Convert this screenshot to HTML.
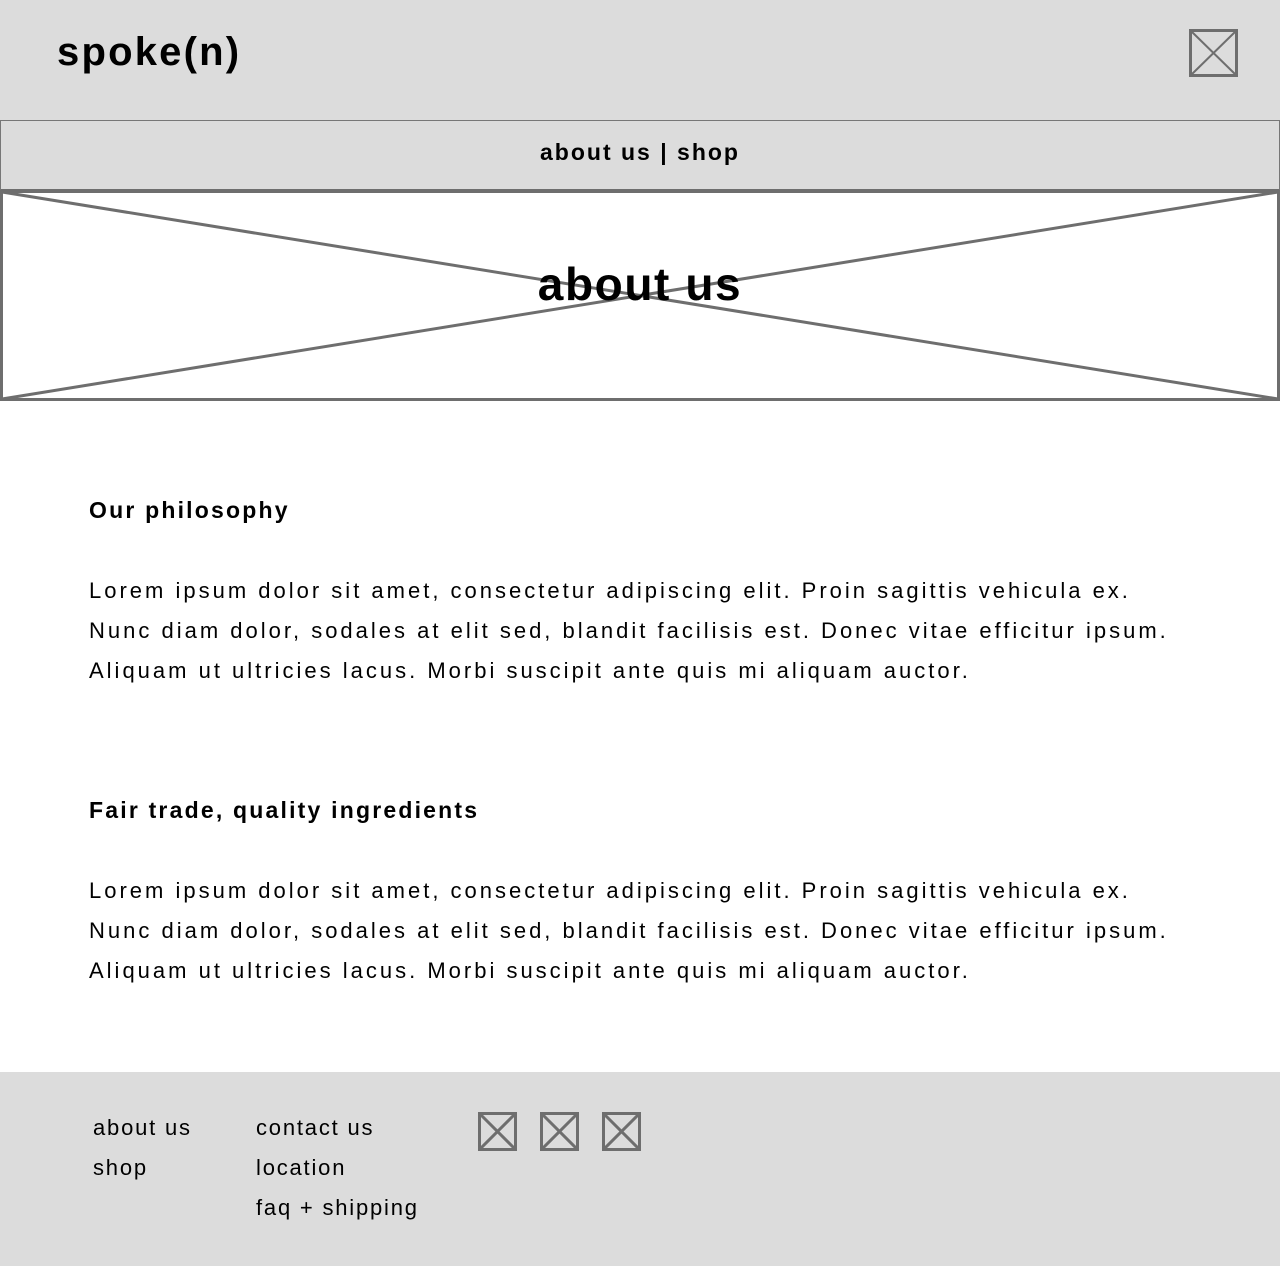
<!DOCTYPE html>
<html><head><meta charset="utf-8"><style>
*{margin:0;padding:0;box-sizing:border-box}
body{width:1280px;height:1266px;background:#fff;font-family:"Liberation Sans",sans-serif;color:#000;position:relative;overflow:hidden}
.hdr{position:absolute;left:0;top:0;width:1280px;height:120px;background:#dcdcdc}
.logo{position:absolute;left:57px;top:30px;font-size:40px;letter-spacing:2.2px;font-weight:bold}
.nav{position:absolute;left:0;top:120px;width:1280px;height:72px;background:#dcdcdc;border:1px solid #777;border-bottom:3px solid #6e6e6e;text-align:center;font-weight:bold;font-size:23px;letter-spacing:2px;line-height:62px}
h2{position:absolute;left:89px;font-size:23px;letter-spacing:2.2px;font-weight:bold}
p{position:absolute;left:89px;font-size:22px;letter-spacing:3px;line-height:40px;white-space:nowrap}
.ft{position:absolute;left:0;top:1072px;width:1280px;height:194px;background:#dcdcdc;font-size:22px;letter-spacing:1.8px;line-height:40px}
.ft div{position:absolute;top:36px}
svg.i{position:absolute}
</style></head><body>
<div class="hdr"><div class="logo">spoke(n)</div>
<svg class="i" style="left:1189px;top:29px" width="49" height="48"><rect x="1.5" y="1.5" width="46" height="45" fill="none" stroke="#6e6e6e" stroke-width="3"/><path d="M2 2L47 46M47 2L2 46" stroke="#6e6e6e" stroke-width="2"/></svg>
</div>
<div class="nav">about us | shop</div>
<svg style="position:absolute;left:0;top:190px" width="1280" height="211"><rect x="1.5" y="1.5" width="1277" height="208" fill="#fff" stroke="#6e6e6e" stroke-width="3"/><path d="M2 2L1278 209M1278 2L2 209" stroke="#6e6e6e" stroke-width="3"/></svg>
<div style="position:absolute;left:0;top:257px;width:1280px;text-align:center;font-size:46px;letter-spacing:1.6px;font-weight:bold">about us</div>
<h2 style="top:497px">Our philosophy</h2>
<p style="top:571px">Lorem ipsum dolor sit amet, consectetur adipiscing elit. Proin sagittis vehicula ex.<br>Nunc diam dolor, sodales at elit sed, blandit facilisis est. Donec vitae efficitur ipsum.<br>Aliquam ut ultricies lacus. Morbi suscipit ante quis mi aliquam auctor.</p>
<h2 style="top:797px">Fair trade, quality ingredients</h2>
<p style="top:871px">Lorem ipsum dolor sit amet, consectetur adipiscing elit. Proin sagittis vehicula ex.<br>Nunc diam dolor, sodales at elit sed, blandit facilisis est. Donec vitae efficitur ipsum.<br>Aliquam ut ultricies lacus. Morbi suscipit ante quis mi aliquam auctor.</p>
<div class="ft">
<div style="left:93px">about us<br>shop</div>
<div style="left:256px">contact us<br>location<br>faq + shipping</div>
<svg class="i" style="left:478px;top:40px" width="39" height="39"><rect x="1.5" y="1.5" width="36" height="36" fill="none" stroke="#6e6e6e" stroke-width="3"/><path d="M2 2L37 37M37 2L2 37" stroke="#6e6e6e" stroke-width="3"/></svg>
<svg class="i" style="left:540px;top:40px" width="39" height="39"><rect x="1.5" y="1.5" width="36" height="36" fill="none" stroke="#6e6e6e" stroke-width="3"/><path d="M2 2L37 37M37 2L2 37" stroke="#6e6e6e" stroke-width="3"/></svg>
<svg class="i" style="left:602px;top:40px" width="39" height="39"><rect x="1.5" y="1.5" width="36" height="36" fill="none" stroke="#6e6e6e" stroke-width="3"/><path d="M2 2L37 37M37 2L2 37" stroke="#6e6e6e" stroke-width="3"/></svg>
</div>
</body></html>
